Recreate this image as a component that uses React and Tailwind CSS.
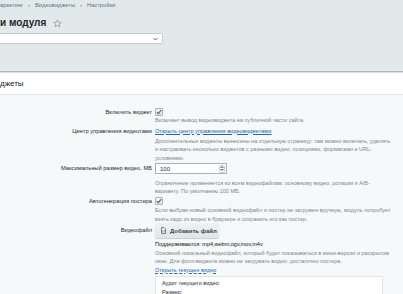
import React from "react";

function Check() {
  return (
    <span className="flex h-[8px] w-[8px] items-center justify-center rounded-[1px] border border-[#a9b3b8] bg-gradient-to-b from-[#f4f6f7] to-[#dde3e5]">
      <svg width="6" height="6" viewBox="0 0 6 6">
        <path d="M0.8 3.1 L2.4 4.6 L5.2 1.2" fill="none" stroke="#55616a" strokeWidth="1.1" />
      </svg>
    </span>
  );
}

function Desc({ lines }) {
  return (
    <div className="text-[5.5px] leading-[8.5px] text-[#7d868b] whitespace-nowrap">
      {lines.map((l, i) => (
        <div key={i}>{l}</div>
      ))}
    </div>
  );
}

function Row({ label, labelClass = "", children, className = "" }) {
  return (
    <div className={"grid grid-cols-[152px_1fr] gap-x-[3px] leading-none " + className}>
      <div className={"text-right text-[5.75px] text-[#1f2a30] whitespace-nowrap " + labelClass}>{label}</div>
      <div>{children}</div>
    </div>
  );
}

export default function App() {
  return (
    <div className="relative h-[294px] w-[403px] overflow-hidden bg-[#f5f9f9] font-['Liberation_Sans',Arial,sans-serif]">
      <div className="h-[71px] bg-[#e2e9ea]">
        <div className="flex pt-[1px] text-[5.75px] leading-[8px] text-[#5b7384] whitespace-nowrap">
          <span className="flex w-0 justify-end">М</span>
          <span>аркетинг</span>
          <span className="mx-[5px]">›</span>
          <span>Видеовиджеты</span>
          <span className="mx-[5px]">›</span>
          <span>Настройки</span>
        </div>
        <div className="mt-[8px] flex items-center text-[10px] font-bold leading-[12px] text-[#1e262b] whitespace-nowrap">
          <span className="flex w-0 justify-end">Настройк</span>
          <span>и модуля</span>
          <svg className="ml-[7px]" width="9" height="9" viewBox="0 0 24 24">
            <path d="M12 2.5l2.9 6.2 6.7.7-5 4.6 1.4 6.6L12 17.3 6 20.6l1.4-6.6-5-4.6 6.7-.7z" fill="none" stroke="#8b969c" strokeWidth="2" strokeLinejoin="round" />
          </svg>
        </div>
        <div className="mt-[4px] flex h-[11px] w-[163px] items-center justify-end rounded-r-[2px] border border-l-0 border-[#c3cbce] bg-white pr-[4px]">
          <svg width="5" height="4" viewBox="0 0 5 4">
            <path d="M0.5 1 L2.5 3 L4.5 1" fill="none" stroke="#555" strokeWidth="0.9" />
          </svg>
        </div>
      </div>
      <div className="h-[1px] bg-[#aeb6b9]"></div>
      <div className="h-[1px] bg-[#d9e0e2]"></div>
      <div className="flex h-[21px] items-center bg-white text-[8px] text-[#1b2126] whitespace-nowrap">
        <span className="flex w-0 justify-end">Видеови</span>
        <span>джеты</span>
      </div>
      <div className="h-[1px] bg-[#e3e9eb]"></div>

      <Row label="Включить виджет" labelClass="leading-[8px]" className="mt-[13px]">
        <Check />
        <Desc lines={["Включает вывод видеовиджета на публичной части сайта."]} />
      </Row>

      <Row label="Центр управления видеотами" labelClass="leading-[9px]" className="mt-[2px]">
        <div className="text-[5.6px] leading-[9px] text-[#2165ae] underline decoration-[0.5px] whitespace-nowrap">
          Открыть центр управления видеовиджетами
        </div>
        <div className="mt-[1px]">
          <Desc
            lines={[
              "Дополнительные виджеты вынесены на отдельную страницу: там можно включать, удалять",
              "и настраивать несколько виджетов с разными видео, позициями, форматами и URL-",
              "условиями.",
            ]}
          />
        </div>
      </Row>

      <Row label="Максимальный размер видео, МБ" labelClass="leading-[11px]" className="mt-[1px]">
        <div className="flex h-[11px] w-[72px] items-center justify-between border border-[#a9b2b7] bg-white pl-[4px] pr-[1px] text-[6px] text-[#1f2a30]">
          <span>100</span>
          <span className="flex h-[8px] w-[6px] flex-col items-center justify-center gap-[1px] rounded-[1px] border border-[#cdd3d6] bg-[#f3f5f6]">
            <svg width="4" height="2" viewBox="0 0 4 2"><path d="M0 2 L2 0 L4 2z" fill="#7a8388" /></svg>
            <svg width="4" height="2" viewBox="0 0 4 2"><path d="M0 0 L2 2 L4 0z" fill="#7a8388" /></svg>
          </span>
        </div>
        <div className="mt-[4.5px]">
          <Desc
            lines={[
              "Ограничение применяется ко всем видеофайлам: основному видео, ротации и A/B-",
              "варианту. По умолчанию 100 МБ.",
            ]}
          />
        </div>
      </Row>

      <Row label="Автогенерация постера" labelClass="leading-[8px]" className="mt-[1px]">
        <Check />
        <div className="mt-[1.5px]">
          <Desc
            lines={[
              "Если выбран новый основной видеофайл и постер не загружен вручную, модуль попробует",
              "взять кадр из видео в браузере и сохранить его как постер.",
            ]}
          />
        </div>
      </Row>

      <Row label="Видеофайл" labelClass="leading-[15px]" className="mt-[0px]">
        <div className="flex h-[15px] w-[64px] items-center gap-[4px] rounded-[2px] bg-gradient-to-b from-[#eef2f3] to-[#dfe6e8] pl-[6px] text-[6px] font-bold text-[#3a464e] shadow-[0_1px_1px_rgba(0,0,0,0.18)] whitespace-nowrap">
          <svg width="5" height="7" viewBox="0 0 5 7">
            <path d="M0.5 0.5 H3 L4.5 2 V6.5 H0.5 Z" fill="none" stroke="#5d6a72" strokeWidth="0.8" />
            <path d="M1.6 3.2 V5.3 M3.2 3.2 V5.3" stroke="#5d6a72" strokeWidth="0.5" />
          </svg>
          <span>Добавить файл</span>
        </div>
        <div className="mt-[2px] text-[5.5px] leading-[8.5px] text-[#111] whitespace-nowrap">
          Поддерживаются: mp4,webm,ogv,mov,m4v
        </div>
        <Desc
          lines={[
            "Основной локальный видеофайл, который будет показываться в мини-версии и раскрытом",
            "окне. Для фото-виджета можно не загружать видео: достаточно постера.",
          ]}
        />
        <div className="text-[5.5px] leading-[8.5px] text-[#2165ae] underline decoration-dashed decoration-[0.5px] whitespace-nowrap">
          Открыть текущее видео
        </div>
        <div className="mt-[2px] h-[40px] w-[228px] border border-[#dfe4e6] bg-white px-[6px] pt-[2px] text-[5.5px] leading-[8.5px] text-[#1f2a30]">
          <div>Аудит текущего видео:</div>
          <div>Размер:</div>
        </div>
      </Row>
    </div>
  );
}
